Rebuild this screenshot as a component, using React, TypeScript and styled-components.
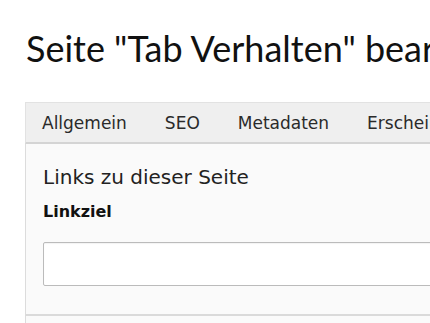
import React from "react";
import styled, { createGlobalStyle } from "styled-components";

const GlobalStyle = createGlobalStyle`
  html, body {
    margin: 0;
    padding: 0;
    background: #ffffff;
    overflow: hidden;
  }
`;

const Page = styled.div`
  width: 700px;
  padding: 0 0 0 25px;
  display: flex;
  flex-direction: column;
`;

const Title = styled.h1`
  margin: 0;
  padding: 24px 0 0 1px;
  height: 102px;
  box-sizing: border-box;
  font-family: "Lato", "Open Sans", sans-serif;
  font-weight: 400;
  font-size: 36px;
  line-height: 48px;
  color: #111;
  white-space: nowrap;
`;

const TabBar = styled.div`
  display: flex;
  gap: 6px;
  height: 42px;
  box-sizing: border-box;
  background: #efefef;
  border: 1px solid #e2e2e2;
  border-bottom: 2px solid #d4d4d4;
`;

const Tab = styled.div`
  display: flex;
  align-items: center;
  padding: 0 16px;
  font-family: "DejaVu Sans", Verdana, sans-serif;
  font-size: 17px;
  color: #2a2a2a;
  white-space: nowrap;
`;

const Section = styled.div<{ $last?: boolean }>`
  background: #fafafa;
  border-left: 1px solid #dcdcdc;
  border-bottom: ${(p) => (p.$last ? "none" : "2px solid #dadada")};
  padding: ${(p) => (p.$last ? "0" : "20px 17px 28px")};
  min-height: ${(p) => (p.$last ? "40px" : "0")};
  display: flex;
  flex-direction: column;
`;

const SectionTitle = styled.div`
  font-family: "DejaVu Sans", Verdana, sans-serif;
  font-size: 20px;
  line-height: 26px;
  color: #222;
`;

const Label = styled.label`
  margin-top: 12px;
  font-family: "DejaVu Sans", Verdana, sans-serif;
  font-weight: 700;
  font-size: 16px;
  line-height: 20px;
  color: #111;
`;

const Input = styled.input`
  margin-top: 20px;
  height: 44px;
  box-sizing: border-box;
  background: #fff;
  border: 1px solid #bbbbbb;
  border-radius: 2px;
  box-shadow: inset 0 1px 1px rgba(0, 0, 0, 0.05);
  outline: none;
`;

const tabs = ["Allgemein", "SEO", "Metadaten", "Erscheinungsbild"];

export default function App() {
  return (
    <>
      <GlobalStyle />
      <Page>
        <Title>Seite "Tab Verhalten" bearbeiten</Title>
        <TabBar>
          {tabs.map((t) => (
            <Tab key={t}>{t}</Tab>
          ))}
        </TabBar>
        <Section>
          <SectionTitle>Links zu dieser Seite</SectionTitle>
          <Label>Linkziel</Label>
          <Input type="text" />
        </Section>
        <Section $last />
      </Page>
    </>
  );
}
